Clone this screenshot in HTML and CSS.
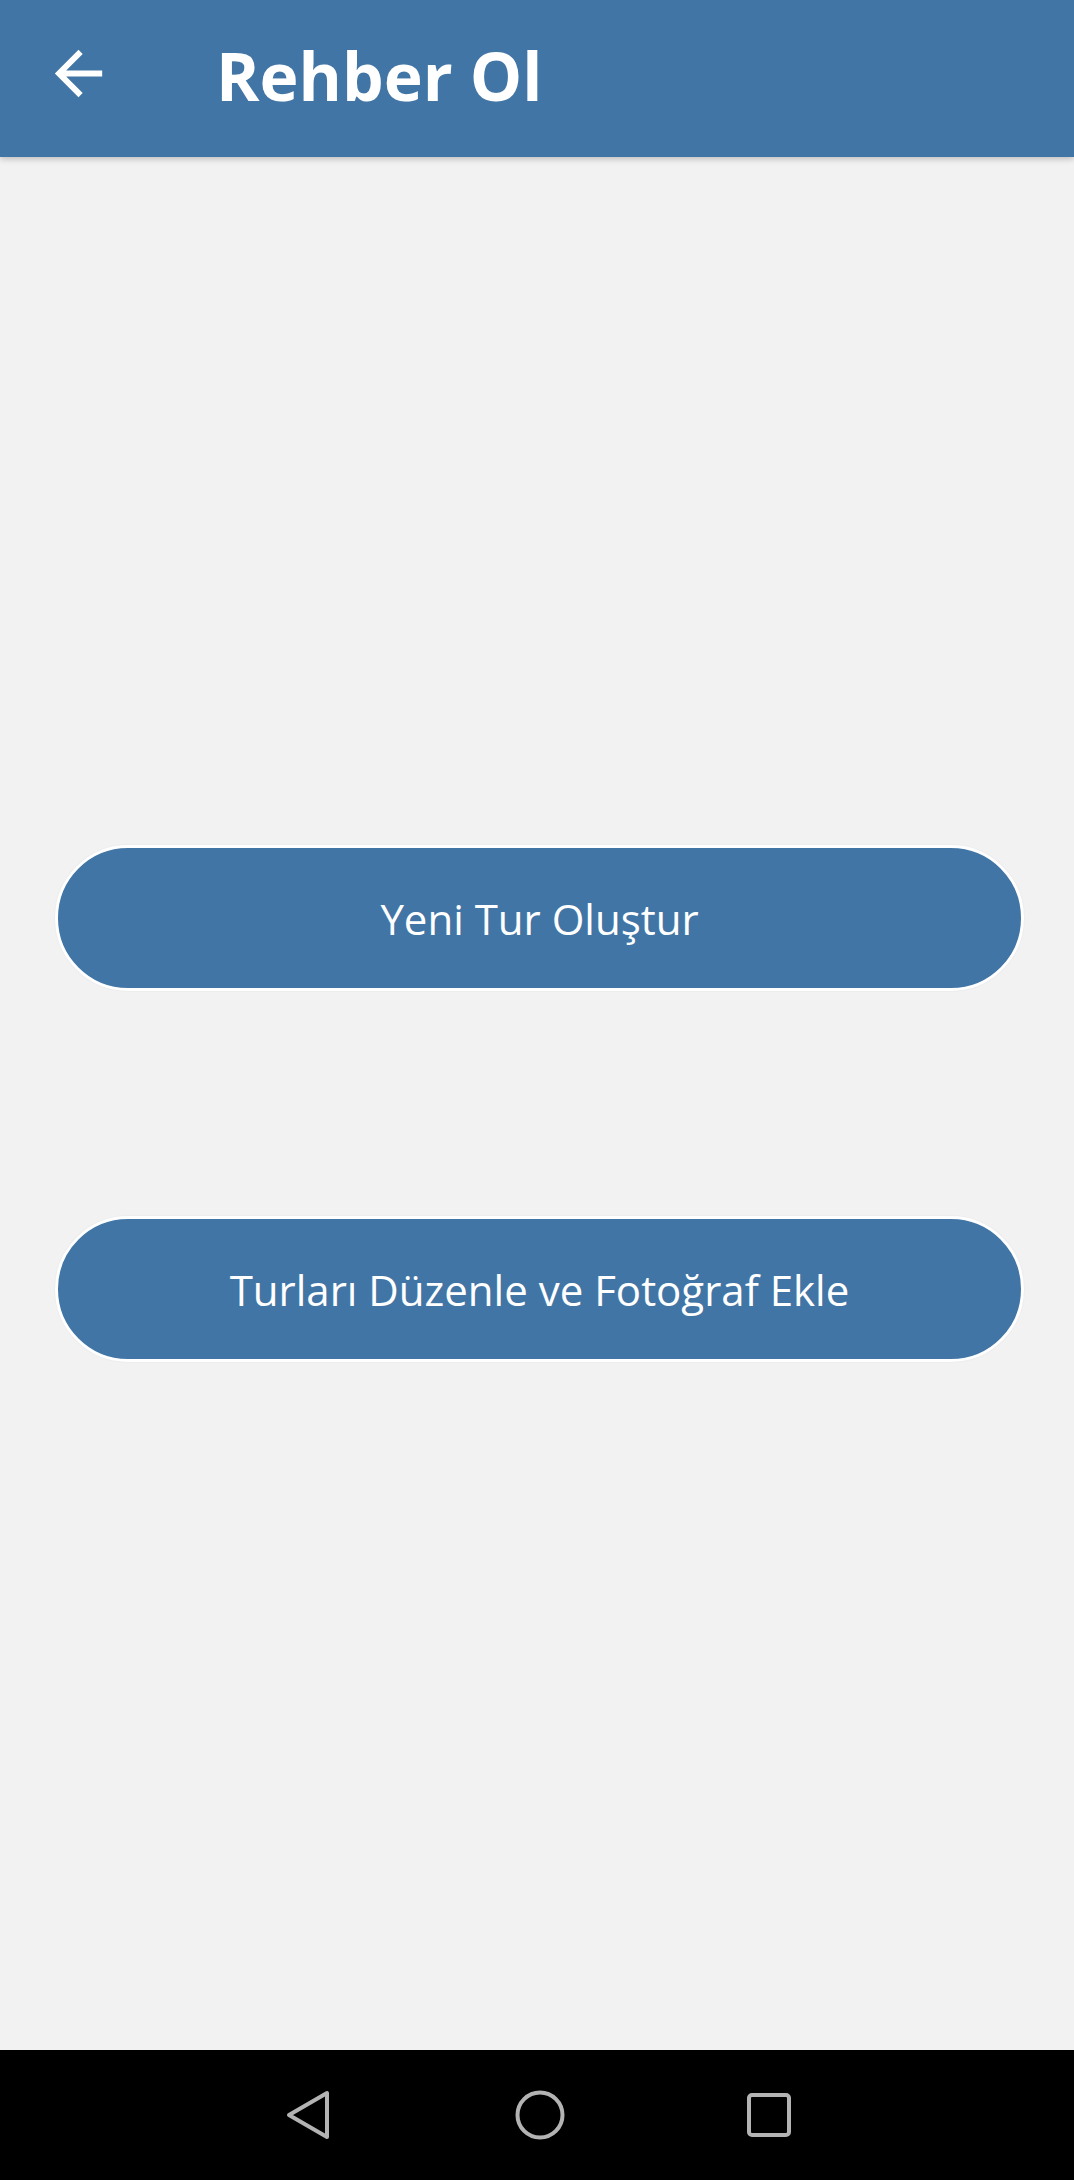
FILE: index.html
```html
<!DOCTYPE html>
<html lang="tr">
<head>
<meta charset="utf-8">
<title>Rehber Ol</title>
<link rel="stylesheet" href="styles.css">
</head>
<body>
<div class="screen">
  <header class="appbar">
    <svg class="back" viewBox="0 0 24 24" aria-hidden="true">
      <path d="M20 11H7.83l5.59-5.59L12 4l-8 8 8 8 1.41-1.41L7.83 13H20v-2z" fill="#ffffff"/>
    </svg>
    <h1 class="title">Rehber Ol</h1>
  </header>
  <main class="content">
    <button class="pill">Yeni Tur Oluştur</button>
    <button class="pill pill-second">Turları Düzenle ve Fotoğraf Ekle</button>
  </main>
  <nav class="navbar">
    <svg class="nav-icon" viewBox="0 0 56 56" aria-hidden="true">
      <polygon points="9,28 47,6 47,50" fill="none" stroke="#b3b3b3" stroke-width="4" stroke-linejoin="round"/>
    </svg>
    <svg class="nav-icon nav-home" viewBox="0 0 56 56" aria-hidden="true">
      <ellipse cx="28" cy="28" rx="22.5" ry="22.5" fill="none" stroke="#b3b3b3" stroke-width="4"/>
    </svg>
    <svg class="nav-icon nav-recent" viewBox="0 0 56 56" aria-hidden="true">
      <rect x="8" y="8" width="40" height="40" rx="3" fill="none" stroke="#b3b3b3" stroke-width="4"/>
    </svg>
  </nav>
</div>
</body>
</html>
```

FILE: styles.css
```css
html, body {
  margin: 0;
  padding: 0;
}

body {
  background: #f2f2f2;
  font-family: "Open Sans", "Noto Sans", "DejaVu Sans", sans-serif;
}

.screen {
  width: 1074px;
  height: 2180px;
  display: flex;
  flex-direction: column;
  overflow: hidden;
}

.appbar {
  height: 157px;
  flex: 0 0 157px;
  background: #4175a5;
  display: flex;
  align-items: flex-start;
  padding-left: 43px;
  box-shadow: 0 2px 6px rgba(0, 0, 0, 0.22);
  position: relative;
  z-index: 1;
  box-sizing: border-box;
}

.back {
  width: 71px;
  height: 71px;
  margin-top: 38px;
  flex: 0 0 71px;
}

.title {
  margin: 30px 0 0 102px;
  font-size: 66px;
  font-weight: 700;
  color: #ffffff;
  line-height: normal;
}

.content {
  flex: 1 1 auto;
  display: flex;
  flex-direction: column;
  padding-top: 688px;
  box-sizing: border-box;
}

.pill {
  margin: 0 50px 0 55px;
  height: 146px;
  border: 3px solid #ffffff;
  border-radius: 73px;
  background: #4175a5;
  color: #ffffff;
  font-family: "Open Sans", "Noto Sans", "DejaVu Sans", sans-serif;
  font-size: 42px;
  font-weight: 400;
  padding: 0;
  box-sizing: border-box;
  box-shadow: 0 0 2px rgba(0, 0, 0, 0.08);
}

.pill-second {
  margin-top: 225px;
}

.navbar {
  height: 130px;
  flex: 0 0 130px;
  background: #000000;
  display: flex;
  align-items: center;
  padding-left: 280px;
}

.nav-icon {
  width: 56px;
  height: 56px;
  flex: 0 0 56px;
}

.nav-home {
  margin-left: 176px;
}

.nav-recent {
  margin-left: 173px;
}
```
